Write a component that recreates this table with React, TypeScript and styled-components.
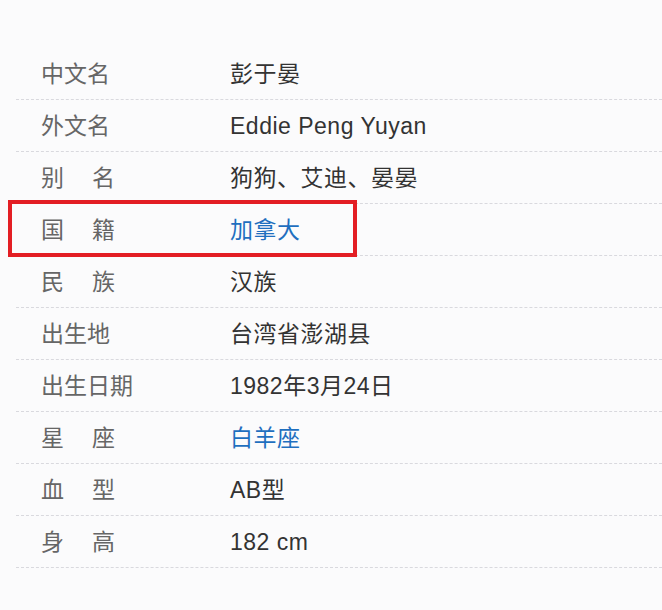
import styled, { createGlobalStyle } from "styled-components";

const GlobalStyle = createGlobalStyle`
  body {
    margin: 0;
    background: #fbfbfc;
    font-family: "Liberation Sans", "Noto Sans CJK SC", sans-serif;
  }
`;

const Page = styled.div`
  width: 662px;
  height: 610px;
  padding: 48px 0 0 16px;
  box-sizing: border-box;
  overflow: hidden;
`;

const List = styled.dl`
  margin: 0;
`;

const Row = styled.div`
  position: relative;
  display: flex;
  align-items: center;
  height: 51px;
  border-bottom: 1px dashed #d9d9de;
`;

const Label = styled.dt<{ $spread?: boolean }>`
  width: 189px;
  padding-left: 25px;
  flex-shrink: 0;
  font-size: 23px;
  line-height: 28px;
  color: #666;
  letter-spacing: ${(p) => (p.$spread ? "28px" : "0")};
`;

const Value = styled.dd<{ $link?: boolean }>`
  margin: 0;
  font-size: 23px;
  line-height: 28px;
  letter-spacing: 0.5px;
  color: ${(p) => (p.$link ? "#1f6fbf" : "#333")};
`;

// red annotation frame drawn over the nationality row
const Highlight = styled.div`
  position: absolute;
  left: -8px;
  top: -4px;
  width: 349px;
  height: 57px;
  border: 4px solid #e31e24;
  box-sizing: border-box;
  pointer-events: none;
`;

const rows = [
  { label: "中文名", value: "彭于晏" },
  { label: "外文名", value: "Eddie Peng Yuyan" },
  { label: "别名", value: "狗狗、艾迪、晏晏" },
  { label: "国籍", value: "加拿大", link: true, mark: true },
  { label: "民族", value: "汉族" },
  { label: "出生地", value: "台湾省澎湖县" },
  { label: "出生日期", value: "1982年3月24日" },
  { label: "星座", value: "白羊座", link: true },
  { label: "血型", value: "AB型" },
  { label: "身高", value: "182 cm" },
];

export default function App() {
  return (
    <>
      <GlobalStyle />
      <Page>
        <List>
          {rows.map((r) => (
            <Row key={r.label}>
              <Label $spread={r.label.length === 2}>{r.label}</Label>
              <Value $link={r.link}>{r.value}</Value>
              {r.mark && <Highlight />}
            </Row>
          ))}
        </List>
      </Page>
    </>
  );
}
